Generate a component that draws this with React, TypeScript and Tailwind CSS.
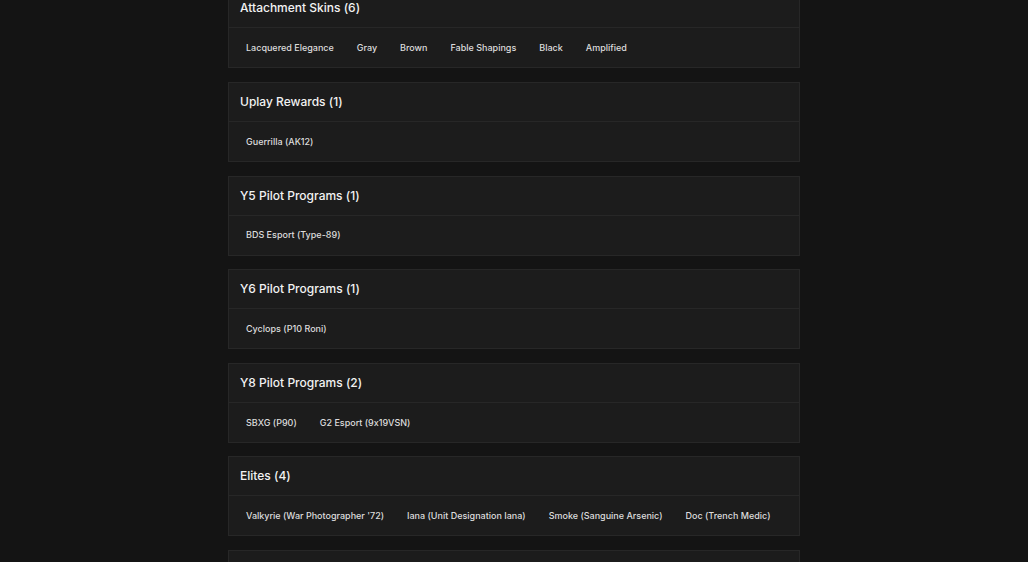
import React from "react";

interface Section {
  title: string;
  items: string[];
}

const SECTIONS: Section[] = [
  {
    title: "Attachment Skins",
    items: ["Lacquered Elegance", "Gray", "Brown", "Fable Shapings", "Black", "Amplified"],
  },
  { title: "Uplay Rewards", items: ["Guerrilla (AK12)"] },
  { title: "Y5 Pilot Programs", items: ["BDS Esport (Type-89)"] },
  { title: "Y6 Pilot Programs", items: ["Cyclops (P10 Roni)"] },
  { title: "Y8 Pilot Programs", items: ["SBXG (P90)", "G2 Esport (9x19VSN)"] },
  {
    title: "Elites",
    items: [
      "Valkyrie (War Photographer '72)",
      "Iana (Unit Designation Iana)",
      "Smoke (Sanguine Arsenic)",
      "Doc (Trench Medic)",
    ],
  },
];

function SectionCard({ title, items }: Section) {
  return (
    <div className="flex flex-col border border-[#272727] bg-[#1c1c1c]">
      {/* Header */}
      <div className="flex h-[39px] items-center border-b border-[#272727] px-[11px]">
        <h3 className="text-[12px] font-medium text-[#f2f2f2]">
          {title} ({items.length})
        </h3>
      </div>

      {/* Items */}
      <div className="flex h-[39px] items-center gap-[11px] px-[11px]">
        {items.map((item) => (
          <span
            key={item}
            className="whitespace-nowrap px-1.5 text-[9px] font-medium text-[#dcdcdc]"
          >
            {item}
          </span>
        ))}
      </div>
    </div>
  );
}

export default function App() {
  return (
    <div
      className="h-[562px] w-full overflow-hidden bg-[#141414] [font-feature-settings:'calt'_0]"
      style={{ fontFamily: "Inter, 'Noto Sans', sans-serif" }}
    >
      <div className="mx-auto -mt-[11.6px] flex w-[572px] flex-col gap-[13.6px]">
        {SECTIONS.map((s) => (
          <SectionCard key={s.title} {...s} />
        ))}
        {/* next card, scrolled below the fold */}
        <div className="h-[80px] border border-[#272727] bg-[#1c1c1c]" />
      </div>
    </div>
  );
}
